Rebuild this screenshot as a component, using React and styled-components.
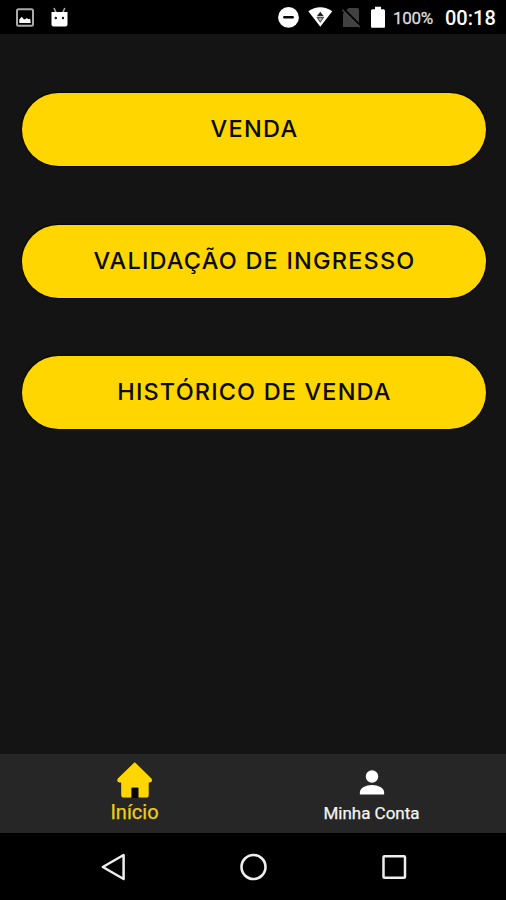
import React from "react";
import styled, { createGlobalStyle } from "styled-components";

const GlobalStyle = createGlobalStyle`
  * {
    box-sizing: border-box;
  }

  body {
    margin: 0;
    background: #141414;
    font-family: Roboto, "Liberation Sans", sans-serif;
  }
`;

const actions = [
  { label: "VENDA", spacing: "1.3px" },
  { label: "VALIDAÇÃO DE INGRESSO", spacing: "1.2px" },
  { label: "HISTÓRICO DE VENDA", spacing: "1.15px" },
];

const ImageIcon = () => (
  <svg width="18" height="19" viewBox="0 0 18 19">
    <rect x="1" y="1.2" width="16" height="16.5" rx="1.5" fill="none" stroke="#aaa" strokeWidth="2" />
    <path d="M3.3 15v-3.6L5.8 8.8l2 2.5h1.6l1.5-1.2 1.3 1.2 2-.5.5 4.2z" fill="#fff" />
  </svg>
);

const AndroidIcon = () => (
  <svg width="17" height="20" viewBox="0 0 17 20">
    <path d="M3 1l2.2 5M13.8 1l-2.2 5" stroke="#aaa" strokeWidth="1.6" />
    <path d="M.5 5h16v12.5a2 2 0 0 1-2 2h-12a2 2 0 0 1-2-2z" fill="#fff" />
    <circle cx="4.8" cy="11" r="1.2" fill="#111" />
    <circle cx="12" cy="11" r="1.2" fill="#111" />
  </svg>
);

const DoNotDisturbIcon = () => (
  <svg width="22" height="22" viewBox="0 0 22 22">
    <circle cx="10.5" cy="11.4" r="10.4" fill="#fff" />
    <path d="M6.3 11.2h8.4" stroke="#000" strokeWidth="2.4" strokeLinecap="round" />
  </svg>
);

const WifiIcon = () => (
  <svg width="26" height="20" viewBox="0 0 26 20">
    <path d="M.3 4.3C8-1 16.6-1 24.3 4.3L12.3 19.7z" fill="#fff" />
    <path d="M8.8 9.2L12.3 4.8l3.5 4.4z" fill="#222" />
    <path d="M9.4 10.6h5.8l-2.9 4.4z" fill="#bbb" stroke="#555" strokeWidth="1.1" />
  </svg>
);

const NoSimIcon = () => (
  <svg width="20" height="21" viewBox="0 0 20 21">
    <path d="M6.5 1H15a2 2 0 0 1 2 2v17H1V6.5z" fill="#414141" />
    <path d="M1.3 1.5l18 18" stroke="#000" strokeWidth="2" />
    <path d="M.3 2.8l17.5 17.5" stroke="#484848" strokeWidth="1.3" />
  </svg>
);

const BatteryIcon = () => (
  <svg width="16" height="22" viewBox="0 0 16 22">
    <path
      d="M5 .8h6v2.4h2.5a1.5 1.5 0 0 1 1.5 1.5v16a1 1 0 0 1-1 1H2a1 1 0 0 1-1-1v-16a1.5 1.5 0 0 1 1.5-1.5H5z"
      fill="#fff"
    />
  </svg>
);

const HomeIcon = () => (
  <svg width="36" height="36" viewBox="0 0 36 36">
    <path
      d="M17.7 1.3L33.8 17.2q1 2.3-1 2.3h-2V33q0 1.7-1.7 1.7h-6.6v-9.8h-8.8v9.8H6.8q-1.7 0-1.7-1.7V19.5H2.5q-2 0-1-2.3z"
      fill="#ffd600"
      stroke="#ffd600"
      strokeWidth="1.8"
      strokeLinejoin="round"
    />
    <path d="M14.6 36V25.7h6.2V36z" fill="#080808" />
  </svg>
);

const PersonIcon = () => (
  <svg width="26" height="28" viewBox="0 0 26 28">
    <circle cx="13" cy="7.5" r="6.2" fill="#fff" />
    <path d="M.9 25.5v-2.3c0-4.4 6-7.3 12.1-7.3s12.1 2.9 12.1 7.3v2.3z" fill="#fff" />
  </svg>
);

const App = () => {
  return (
    <Screen>
      <GlobalStyle />
      <StatusBar>
        <Notifications>
          <ImageIcon />
          <AndroidIcon />
        </Notifications>
        <SystemStatus>
          <DoNotDisturbIcon />
          <WifiIcon />
          <NoSimIcon />
          <BatteryIcon />
          <Battery>100%</Battery>
          <Clock>00:18</Clock>
        </SystemStatus>
      </StatusBar>

      <Actions>
        {actions.map(({ label, spacing }) => (
          <ActionButton key={label} $spacing={spacing}>
            {label}
          </ActionButton>
        ))}
      </Actions>

      <TabBar>
        <Tab $active>
          <HomeIcon />
          <TabLabel $active>Início</TabLabel>
        </Tab>
        <Tab>
          <PersonIcon />
          <TabLabel>Minha Conta</TabLabel>
        </Tab>
      </TabBar>

      {/* Android navigation keys */}
      <SystemKeys>
        <svg width="28" height="28" viewBox="0 0 28 28">
          <path d="M24.6 2v24L3.8 14z" fill="none" stroke="#eee" strokeWidth="2.5" strokeLinejoin="round" />
        </svg>
        <svg width="28" height="28" viewBox="0 0 28 28">
          <circle cx="13.5" cy="14" r="12" fill="none" stroke="#eee" strokeWidth="2.6" />
        </svg>
        <svg width="28" height="28" viewBox="0 0 28 28">
          <rect x="3.5" y="3.3" width="21.5" height="21.5" rx="1" fill="none" stroke="#eee" strokeWidth="2.5" />
        </svg>
      </SystemKeys>
    </Screen>
  );
};

const Screen = styled.div`
  display: flex;
  flex-direction: column;
  width: 506px;
  height: 900px;
  overflow: hidden;
  background: #141414;

  svg {
    display: block;
    flex: none;
  }
`;

const StatusBar = styled.header`
  display: flex;
  align-items: center;
  justify-content: space-between;
  height: 34px;
  padding: 0 11px 0 16px;
  background: #000;
`;

const Notifications = styled.div`
  display: flex;
  align-items: flex-end;
  gap: 17px;
  padding-bottom: 1px;
`;

const SystemStatus = styled.div`
  display: flex;
  align-items: center;
  gap: 8px;
`;

const Battery = styled.span`
  width: 40px;
  margin: 2px 4px 0 -0.5px;
  color: #ddd;
  font-size: 17px;
  line-height: 20px;
  letter-spacing: -0.3px;
  -webkit-text-stroke: 0.3px #ddd;
`;

const Clock = styled.span`
  width: 50px;
  margin-top: 2px;
  color: #fff;
  font-size: 20px;
  font-weight: 500;
  line-height: 22px;
`;

const Actions = styled.main`
  display: flex;
  flex: 1;
  flex-direction: column;
  gap: 58.5px;
  padding: 59px 20px 0 22px;
`;

const ActionButton = styled.button`
  flex: none;
  height: 73px;
  padding: 0 0 2px 1px;
  border: 0;
  border-radius: 37px;
  box-shadow: 0 0 1px 1px #080808;
  background: #ffd600;
  color: #0c0b00;
  font-family: Inter, "Open Sans", sans-serif;
  font-size: 23.5px;
  font-weight: 500;
  letter-spacing: ${({ $spacing }) => $spacing};
  white-space: nowrap;
`;

const TabBar = styled.nav`
  display: grid;
  grid-template-columns: 237px 237px;
  justify-content: center;
  height: 79px;
  background: #262626;
`;

const Tab = styled.div`
  display: flex;
  flex-direction: column;
  align-items: center;
  padding-top: ${({ $active }) => ($active ? "8px" : "15px")};
`;

const TabLabel = styled.span`
  margin-top: ${({ $active }) => ($active ? "3px" : "5px")};
  color: ${({ $active }) => ($active ? "#f0cd18" : "#f5f5f5")};
  font-size: ${({ $active }) => ($active ? "20px" : "17px")};
  line-height: 22px;
  -webkit-text-stroke: 0.25px currentColor;
`;

const SystemKeys = styled.footer`
  display: flex;
  align-items: center;
  justify-content: space-between;
  height: 67px;
  padding: 0 98px 0 99px;
  background: #000;
`;

export default App;
